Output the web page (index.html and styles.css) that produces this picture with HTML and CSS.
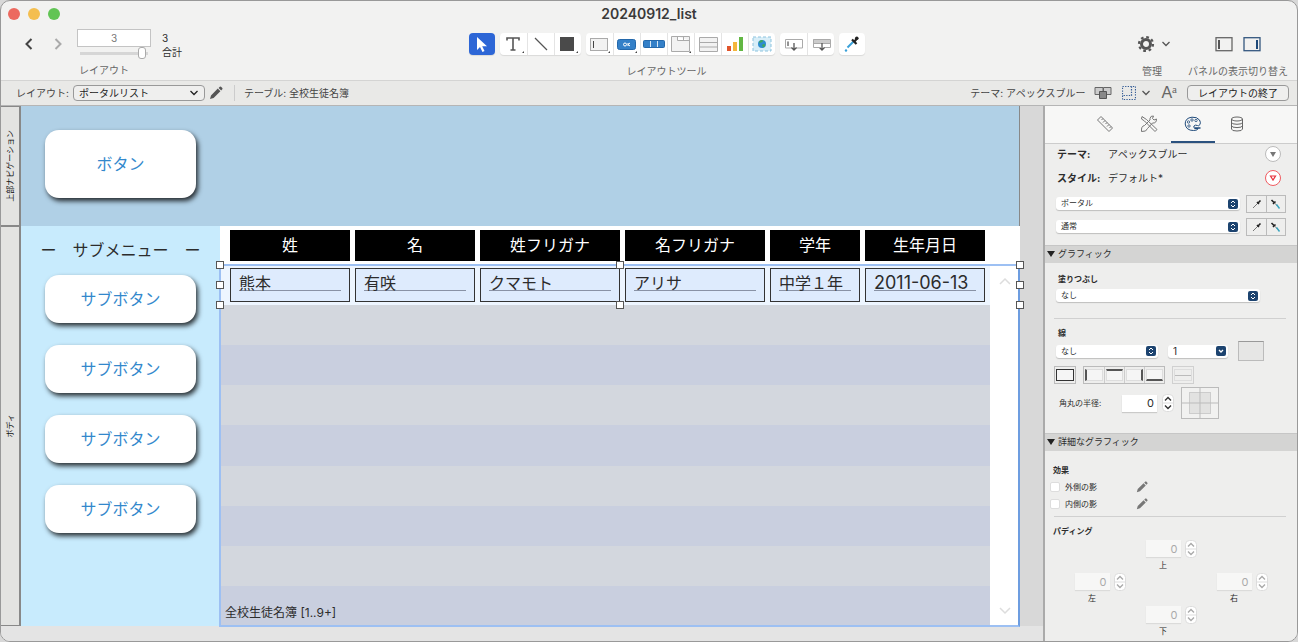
FILE: index.html
```html
<!DOCTYPE html>
<html lang="ja">
<head>
    <meta charset="UTF-8">
    <meta name="viewport" content="width=device-width, initial-scale=1.0">
    <title>20240912_list</title>
    <link rel="stylesheet" href="styles.css">
</head>
<body>
    <!-- shared icons -->
    <svg class="sprite" aria-hidden="true">
        <symbol id="i-pencil" viewBox="0 0 14 14"><path d="M1 13l1-3.600 6.800-6.800 2.600 2.600-6.800 6.800zM9.600 1.900l1.200-1.200q.6-.5 1.200 0l1.300 1.300q.5.6 0 1.200l-1.100 1.200z"/></symbol>
        <symbol id="i-down" viewBox="0 0 10 6"><path d="M1.500 1l3.500 3.500L8.500 1" fill="none" stroke="currentColor" stroke-width="1.300"/></symbol>
        <symbol id="i-updown" viewBox="0 0 10 10"><rect width="10" height="10" rx="2" fill="#1d4470"/><path d="M3 4l2-2 2 2M3 6l2 2 2-2" fill="none" stroke="#fff"/></symbol>
        <symbol id="i-combo" viewBox="0 0 10 10"><rect width="10" height="10" rx="2" fill="#1d4470"/><path d="M3 4l2 2 2-2" fill="none" stroke="#fff" stroke-width="1.300"/></symbol>
        <symbol id="i-stepper" viewBox="0 0 12 18"><rect x=".5" y=".5" width="11" height="17" rx="4" fill="#fff" stroke="#dcdcdc"/><path d="M1 9h10" stroke="#ddd"/><path d="M3 6.500l3-3 3 3M3 11.500l3 3 3-3" fill="none" stroke="currentColor" stroke-width="1.400"/></symbol>
        <symbol id="i-drop" viewBox="0 0 12 12"><path d="M2 10l5-5" stroke="#777"/><path d="M6 4l2 2M7 5l2.500-2.500" stroke="#222" stroke-width="1.600"/></symbol>
        <symbol id="i-drop-fill" viewBox="0 0 12 12"><path d="M1.500 2L4 4.500M3 6l2.500-2.500" stroke="#222" stroke-width="1.600"/><path d="M4.500 5l3 3" stroke="#777"/><path d="M6.500 6.500l3 4" stroke="#35a3bd" stroke-width="1.400"/></symbol>
    </svg>

    <div class="window">
        <header class="titlebar">
            <div class="lights"><i class="red"></i><i class="yellow"></i><i class="green"></i></div>
            <h1>20240912_list</h1>
        </header>

        <div class="toolbar">
            <div class="nav">
                <button class="plain" aria-label="前のレイアウト"><svg width="10" height="14" viewBox="0 0 10 14"><path d="M7.500 2L2.500 7l5 5" fill="none" stroke="#444" stroke-width="2"/></svg></button>
                <button class="plain next" aria-label="次のレイアウト"><svg width="10" height="14" viewBox="0 0 10 14"><path d="M2.500 2l5 5-5 5" fill="none" stroke="#aaa" stroke-width="2"/></svg></button>
                <div class="record">
                    <input class="number" type="text" value="3" aria-label="レイアウト番号">
                    <input class="slider" type="range" min="1" max="3" value="3" aria-label="レイアウト移動">
                    <span class="caption">レイアウト</span>
                </div>
                <div class="total"><span>3</span><span>合計</span></div>
            </div>

            <div class="tools">
                <div class="tool-row">
                    <div class="group selected">
                        <button aria-label="選択"><svg width="26" height="22" viewBox="0 0 26 22"><path d="M8 4v13l3-3 2.500 5 2-1-2.300-4.800H18z" fill="#fff"/></svg></button>
                    </div>
                    <div class="group">
                        <button class="more" aria-label="テキスト"><svg width="26" height="22" viewBox="0 0 26 22"><path d="M7 7.500V5h12v2.500M13 5v12M10.500 17h5" fill="none" stroke="#555" stroke-width="1.600"/></svg></button>
                        <button aria-label="線"><svg width="26" height="22" viewBox="0 0 26 22"><path d="M7 5l12 12" stroke="#555" stroke-width="1.300"/></svg></button>
                        <button class="more" aria-label="図形"><svg width="26" height="22" viewBox="0 0 26 22"><rect x="5" y="4" width="14" height="14" fill="#4a4a4a"/></svg></button>
                    </div>
                    <div class="group">
                        <button class="more" aria-label="フィールド"><svg width="26" height="22" viewBox="0 0 26 22"><rect x="4.500" y="5.500" width="17" height="12" fill="#f2f2f2" stroke="#aaa"/><path d="M7.500 8v7" stroke="#444"/></svg></button>
                        <button class="more" aria-label="ボタン"><svg width="26" height="22" viewBox="0 0 26 22"><rect x="3.500" y="6.500" width="18" height="10" rx="2" fill="#3480c8" stroke="#2468ab"/><circle cx="11" cy="11.500" r="1.500" fill="none" stroke="#fff"/><path d="M14 10v3M16 10l-2 1.500 2 1.500" stroke="#fff" fill="none"/></svg></button>
                        <button aria-label="ボタンバー"><svg width="26" height="22" viewBox="0 0 26 22"><rect x="2.500" y="7.500" width="21" height="7" rx="1" fill="#3480c8" stroke="#2468ab"/><path d="M9.500 8v6M16.500 8v6" stroke="#d5e6f5"/></svg></button>
                        <button class="more" aria-label="タブ"><svg width="26" height="22" viewBox="0 0 26 22"><path d="M3.500 18.500v-15h18v15zM9.500 3.500v4h12M15.500 3.500v4" fill="#f2f2f2" stroke="#aaa"/></svg></button>
                        <button aria-label="ポータル"><svg width="26" height="22" viewBox="0 0 26 22"><path d="M4.500 4.500h18v14h-18zM4.500 9.500h18M4.500 14h18" fill="#f2f2f2" stroke="#aaa"/></svg></button>
                        <button aria-label="グラフ"><svg width="26" height="22" viewBox="0 0 26 22"><path d="M5 13h4v5H5z" fill="#e0542b"/><path d="M11 9h4v9h-4z" fill="#f4b63c"/><path d="M17 4h4v14h-4z" fill="#62b743"/></svg></button>
                        <button aria-label="Web ビューア"><svg width="26" height="22" viewBox="0 0 26 22"><rect x="4" y="4" width="18" height="14" fill="#d8eef8" stroke="#8cc3de" stroke-dasharray="3 2"/><circle cx="13" cy="11" r="4" fill="#2e8ed0"/><path d="M10 9q2-3 4-1.500 0 2-2 2t-1 2zM13 12q3-2 3 0 0 2-2 2.500z" fill="#3fa95c"/></svg></button>
                    </div>
                    <div class="group">
                        <button aria-label="フィールド挿入"><svg width="26" height="22" viewBox="0 0 26 22"><path d="M12 15H5.500V6.500h17V15H16M8 8.500V13" fill="none" stroke="#aaa"/><path d="M8 8.500V13" stroke="#555"/><path d="M14 10v7M11.500 14.500L14 17l2.500-2.500" fill="none" stroke="#555" stroke-width="1.300"/></svg></button>
                        <button aria-label="パート挿入"><svg width="26" height="22" viewBox="0 0 26 22"><path d="M5 6h17v4H5z" fill="#ccc"/><path d="M11 14.500H5.500v-8h17v8H16M5.500 10.500h17" fill="none" stroke="#aaa"/><path d="M14 10v7M11.500 14.500L14 17l2.500-2.500" fill="none" stroke="#555" stroke-width="1.300"/></svg></button>
                    </div>
                    <div class="group">
                        <button aria-label="書式のコピー"><svg width="26" height="22" viewBox="0 0 26 22"><path d="M8.500 14.500l6-6" stroke="#39a0d8" stroke-width="2"/><path d="M13 6.500l4.500 4.500M15 9l3-3.500" stroke="#222" stroke-width="2.200"/><circle cx="17.800" cy="5.200" r="1.800" fill="#222"/><circle cx="7" cy="17.500" r="1.200" fill="#39a0d8"/></svg></button>
                    </div>
                </div>
                <span class="caption">レイアウトツール</span>
            </div>

            <div class="side">
                <div class="side-item">
                    <div class="side-row">
                        <button class="plain" aria-label="管理"><svg width="18" height="18" viewBox="0 0 18 18"><circle cx="9" cy="9" r="4.500" fill="none" stroke="#555" stroke-width="3"/><circle cx="9" cy="9" r="7" fill="none" stroke="#555" stroke-width="2.200" stroke-dasharray="2.750 2.750"/></svg></button>
                        <svg class="chev" width="10" height="6"><use href="#i-down"/></svg>
                    </div>
                    <span class="caption">管理</span>
                </div>
                <div class="side-item">
                    <div class="side-row panels">
                        <button class="plain" aria-label="左パネル"><svg width="18" height="15" viewBox="0 0 18 15"><rect x="1" y=".7" width="16" height="13" fill="none" stroke="#666" stroke-width="1.300"/><path d="M4 3v9" stroke="#555" stroke-width="2"/></svg></button>
                        <button class="plain" aria-label="右パネル"><svg width="18" height="15" viewBox="0 0 18 15"><rect x="1" y=".7" width="16" height="13" fill="none" stroke="#34577f" stroke-width="1.300"/><path d="M14 3v9" stroke="#1f4a7a" stroke-width="2"/></svg></button>
                    </div>
                    <span class="caption">パネルの表示切り替え</span>
                </div>
            </div>
        </div>

        <div class="layoutbar">
            <label for="layout">レイアウト:</label>
            <div class="popup outline">
                <select id="layout"><option>ポータルリスト</option></select>
                <svg width="10" height="6"><use href="#i-down"/></svg>
            </div>
            <button class="plain edit" aria-label="レイアウト設定"><svg width="14" height="14" fill="#555"><use href="#i-pencil"/></svg></button>
            <span class="table-name">テーブル: 全校生徒名簿</span>
            <span class="theme-name">テーマ: アペックスブルー</span>
            <button class="plain" aria-label="テーマ変更"><svg width="18" height="14" viewBox="0 0 18 14"><path d="M1 1.500h8v7H1zM9.500 1.500h7.500v7H9.500z" fill="#ccc" stroke="#666"/><path d="M5.500 5.500h7v7h-7z" fill="#888" stroke="#555"/></svg></button>
            <button class="plain" aria-label="表示"><svg width="14" height="14" viewBox="0 0 14 14"><path d="M.5 .5h13v13H.5zM9.500 .5v9h-9" fill="none" stroke="#345c96" stroke-width="1.200" stroke-dasharray="1.300 1.300"/></svg></button>
            <svg class="chev" width="10" height="6"><use href="#i-down"/></svg>
            <button class="plain font-size" aria-label="書式設定">A<sup>a</sup></button>
            <button class="exit">レイアウトの終了</button>
        </div>

        <div class="main">
            <main class="canvas">
                <div class="part top-part">
                    <div class="part-label"><span>上部ナビゲーション</span></div>
                    <div class="top-nav"><button class="card big">ボタン</button></div>
                </div>
                <div class="part body-part">
                    <div class="part-label"><span>ボディ</span></div>
                    <nav class="submenu">
                        <h2>ー　サブメニュー　ー</h2>
                        <button class="card">サブボタン</button>
                        <button class="card">サブボタン</button>
                        <button class="card">サブボタン</button>
                        <button class="card">サブボタン</button>
                    </nav>
                    <div class="list">
                        <table>
                            <colgroup><col class="c-first"><col class="c-name"><col class="c-kana"><col class="c-kana"><col class="c-grade"><col class="c-date"><col></colgroup>
                            <thead>
                                <tr><th><div>姓</div></th><th><div>名</div></th><th><div>姓フリガナ</div></th><th><div>名フリガナ</div></th><th><div>学年</div></th><th><div>生年月日</div></th><th></th></tr>
                            </thead>
                            <tbody>
                                <tr class="record-row"><td><div><span>熊本</span></div></td><td><div><span>有咲</span></div></td><td><div><span>クマモト</span></div></td><td><div><span>アリサ</span></div></td><td><div><span>中学１年</span></div></td><td><div><span class="date">2011-06-13</span></div></td><td></td></tr>
                                <tr class="stripe"><td colspan="7"></td></tr>
                                <tr class="stripe"><td colspan="7"></td></tr>
                                <tr class="stripe"><td colspan="7"></td></tr>
                                <tr class="stripe"><td colspan="7"></td></tr>
                                <tr class="stripe"><td colspan="7"></td></tr>
                                <tr class="stripe"><td colspan="7"></td></tr>
                                <tr class="stripe"><td colspan="7"></td></tr>
                                <tr class="stripe"><td colspan="7">全校生徒名簿 [1..9+]</td></tr>
                            </tbody>
                        </table>
                        <div class="scroll">
                            <svg width="12" height="8" viewBox="0 0 12 8"><path d="M1 7l5-5 5 5" fill="none" stroke="#ddd" stroke-width="1.500"/></svg>
                            <svg width="12" height="8" viewBox="0 0 12 8"><path d="M1 1l5 5 5-5" fill="none" stroke="#ddd" stroke-width="1.500"/></svg>
                        </div>
                        <div class="portal-frame"></div>
                        <div class="handles"><i class="tl"></i><i class="tc"></i><i class="tr"></i><i class="ml"></i><i class="mr"></i><i class="bl"></i><i class="bc"></i><i class="br"></i></div>
                    </div>
                </div>
            </main>

            <aside class="inspector">
                <div class="tabs">
                    <button aria-label="位置"><svg width="18" height="18" viewBox="0 0 18 18"><path d="M1.500 5L5 1.500 16.500 13 13 16.500zM7 3.500L5.500 5M9 5.500L7 7.500M11 7.500L9.500 9M13 9.500l-2 2M15 11.500L13.500 13" fill="none" stroke="#777"/></svg></button>
                    <button aria-label="スタイル"><svg width="18" height="18" viewBox="0 0 18 18"><path d="M2 1.500L1.500 4l3 2L15 16.500l2-2L6.500 4.500zM16.500 4l-2.500 1-1.500-1.500 1-2.500q-3-.5-3.500 2.500L10 5 4.500 10.500Q1 11 1.500 16.500q5 .5 6-3L12.500 8q4 .5 4-4z" fill="none" stroke="#777"/></svg></button>
                    <button class="active" aria-label="外観"><svg width="18" height="16" viewBox="0 0 18 16"><path d="M16 8.500q1-2-.5-4.500Q13 .8 8 1.200 1 2 1.200 8 2 14.500 9.500 14.500q4.500 0 4.500-2h-3q-2-1-1-2.500 1-1.500 3.500-.5 1 1 2.500-1z" fill="none" stroke="#1f4a7a"/><g fill="none" stroke="#1f4a7a" stroke-width=".8"><circle cx="4.500" cy="6" r="1.200"/><circle cx="8" cy="4" r="1.200"/><circle cx="12" cy="4.500" r="1.200"/><circle cx="5" cy="10" r="1.200"/></g><path d="M10.500 12h6" stroke="#1f4a7a" stroke-width="1.500"/></svg></button>
                    <button aria-label="データ"><svg width="14" height="16" viewBox="0 0 14 16"><path d="M1.500 3v10q0 2 5.500 2t5.500-2V3M1.500 6.300q0 2 5.500 2t5.500-2M1.500 9.600q0 2 5.500 2t5.500-2" fill="none" stroke="#666"/><ellipse cx="7" cy="3" rx="5.500" ry="2" fill="none" stroke="#666"/></svg></button>
                </div>

                <div class="theme-row"><b>テーマ:</b><span>アペックスブルー</span><button class="round" aria-label="テーマメニュー"><svg width="8" height="7" viewBox="0 0 8 7"><path d="M1 1h6L4 6z" fill="#777"/></svg></button></div>
                <div class="theme-row style-row"><b>スタイル:</b><span>デフォルト*</span><button class="round red" aria-label="スタイルメニュー"><svg width="8" height="7" viewBox="0 0 8 7"><path d="M1.500 1h5L4 5z" fill="none" stroke="#e8323c" stroke-width="1.200"/></svg></button></div>

                <div class="pick-row">
                    <div class="popup"><select aria-label="オブジェクト"><option>ポータル</option></select><svg width="10" height="10"><use href="#i-updown"/></svg></div>
                    <div class="pair"><button aria-label="コピー"><svg width="12" height="12"><use href="#i-drop"/></svg></button><button aria-label="ペースト"><svg width="12" height="12"><use href="#i-drop-fill"/></svg></button></div>
                </div>
                <div class="pick-row">
                    <div class="popup"><select aria-label="状態"><option>通常</option></select><svg width="10" height="10"><use href="#i-updown"/></svg></div>
                    <div class="pair"><button aria-label="コピー"><svg width="12" height="12"><use href="#i-drop"/></svg></button><button aria-label="ペースト"><svg width="12" height="12"><use href="#i-drop-fill"/></svg></button></div>
                </div>

                <h3>グラフィック</h3>
                <div class="section fill">
                    <label for="fill">塗りつぶし</label>
                    <div class="popup wide"><select id="fill"><option>なし</option></select><svg width="10" height="10"><use href="#i-updown"/></svg></div>
                </div>
                <hr>
                <div class="section line">
                    <label for="line">線</label>
                    <div class="line-row">
                        <div class="popup line-style"><select id="line"><option>なし</option></select><svg width="10" height="10"><use href="#i-updown"/></svg></div>
                        <div class="popup line-width"><select aria-label="線幅"><option>1</option></select><svg width="10" height="10"><use href="#i-combo"/></svg></div>
                        <button class="swatch" aria-label="線の色"></button>
                    </div>
                    <div class="sides">
                        <div class="side-set"><button class="all" aria-label="全辺"><i></i></button></div>
                        <div class="side-set"><button class="left" aria-label="左辺"><i></i></button><button class="top" aria-label="上辺"><i></i></button><button class="right" aria-label="右辺"><i></i></button><button class="bottom" aria-label="下辺"><i></i></button></div>
                        <div class="side-set off"><button class="between" aria-label="行間"><i></i></button></div>
                    </div>
                    <div class="radius-row">
                        <label for="radius">角丸の半径:</label>
                        <input id="radius" type="text" value="0">
                        <svg class="step" width="12" height="18"><use href="#i-stepper"/></svg>
                        <svg class="corners" width="38" height="32" viewBox="0 0 38 32"><rect x=".5" y=".5" width="37" height="31" fill="#f1f1f0" stroke="#bbb"/><rect x="8.500" y="5.500" width="21" height="21" fill="#e2e2e1" stroke="#ccc"/><path d="M19 1v30M1 16h36" stroke="#bbb"/></svg>
                    </div>
                </div>

                <h3>詳細なグラフィック</h3>
                <div class="section effects">
                    <b>効果</b>
                    <div class="check"><input type="checkbox" id="outer"><label for="outer">外側の影</label><button class="plain" aria-label="外側の影を編集"><svg width="12" height="12" fill="#777"><use href="#i-pencil"/></svg></button></div>
                    <div class="check"><input type="checkbox" id="inner"><label for="inner">内側の影</label><button class="plain" aria-label="内側の影を編集"><svg width="12" height="12" fill="#777"><use href="#i-pencil"/></svg></button></div>
                </div>
                <hr>
                <div class="section padding">
                    <b>パディング</b>
                    <div class="pads">
                        <div class="pad up"><input id="p-top" type="text" value="0" disabled><svg class="step" width="12" height="18"><use href="#i-stepper"/></svg><label for="p-top">上</label></div>
                        <div class="pad lt"><input id="p-left" type="text" value="0" disabled><svg class="step" width="12" height="18"><use href="#i-stepper"/></svg><label for="p-left">左</label></div>
                        <div class="pad rt"><input id="p-right" type="text" value="0" disabled><svg class="step" width="12" height="18"><use href="#i-stepper"/></svg><label for="p-right">右</label></div>
                        <div class="pad dn"><input id="p-bottom" type="text" value="0" disabled><svg class="step" width="12" height="18"><use href="#i-stepper"/></svg><label for="p-bottom">下</label></div>
                    </div>
                </div>
            </aside>
        </div>
    </div>
</body>
</html>
```
FILE: styles.css
```css
* {
    box-sizing: border-box;
}
body {
    margin: 0;
    background: #d8d8d8;
    color: #2c2c2c;
    font-family: Inter, "Noto Sans CJK JP", sans-serif;
    font-size: 10px;
    line-height: 16px;
}
button, input, select {
    font: inherit;
    color: inherit;
    margin: 0;
    padding: 0;
    border: none;
    background: none;
    border-radius: 0;
}
svg {
    display: block;
    flex: none;
}
h1, h2, h3 {
    margin: 0;
    font-weight: normal;
}
.sprite {
    position: absolute;
    width: 0;
    height: 0;
}
.window {
    display: flex;
    flex-direction: column;
    min-height: 100vh;
    border: 1px solid #999;
    border-radius: 10px;
    overflow: hidden;
    background: #f2f2f1;
}

/* title bar */
.titlebar {
    display: grid;
    grid-template-columns: 1fr auto 1fr;
    align-items: center;
    height: 26px;
    padding: 0 7px;
}
.titlebar h1 {
    font-size: 14px;
    font-weight: 600;
    color: #3a3a3a;
}
.lights {
    display: flex;
    gap: 8px;
}
.lights i {
    width: 12px;
    height: 12px;
    border-radius: 50%;
}
.lights .red { background: #ec695f; }
.lights .yellow { background: #f4be4f; }
.lights .green { background: #61c454; }

/* toolbar */
.toolbar {
    display: flex;
    justify-content: space-between;
    height: 54px;
    padding: 0 9px 0 21px;
    border-bottom: 1px solid #d4d4d3;
}
.plain {
    display: flex;
    align-items: center;
    justify-content: center;
}
.caption {
    color: #666;
    line-height: 16px;
}
.nav {
    display: flex;
    align-items: flex-start;
    padding-right: 14px;
}
.nav .plain {
    width: 14px;
    height: 34px;
}
.nav .next {
    width: 28px;
    margin-left: 8px;
}
.record {
    display: flex;
    flex-direction: column;
    width: 74px;
    margin: 2px 0 0 5px;
}
.number {
    width: 100%;
    height: 18px;
    background: #fff;
    border: 1px solid #c4c4c4;
    text-align: center;
    color: #777;
}
.slider {
    appearance: none;
    width: 100%;
    height: 12px;
    padding: 0 5px 0 2px;
    background: linear-gradient(#d6d6d6, #d6d6d6) center / 68px 3px no-repeat;
}
.slider::-webkit-slider-thumb {
    appearance: none;
    width: 8px;
    height: 12px;
    border: 1px solid #aaa;
    border-radius: 3px;
    background: #fff;
}
.record .caption {
    padding-left: 2px;
    margin-top: 3px;
}
.total {
    display: flex;
    flex-direction: column;
    padding: 4px 0 0 11px;
    line-height: 14px;
}
.tools {
    display: flex;
    flex-direction: column;
    align-items: center;
    gap: 8px;
    padding-top: 6px;
}
.tool-row {
    display: flex;
    gap: 5px;
}
.group {
    display: flex;
    background: #fff;
    border-radius: 4px;
    box-shadow: 0 1px 1px rgba(0, 0, 0, 0.1);
}
.group button {
    position: relative;
    width: 27px;
    height: 22px;
}
.group button:only-child {
    width: 26px;
}
.group button + button {
    border-left: 1px solid #e4e4e4;
}
.group.selected {
    background: #2d66d6;
}
.more::after {
    content: "";
    position: absolute;
    right: 3px;
    bottom: 2px;
    border: 1px solid #444;
    border-top-color: transparent;
    border-left-color: transparent;
}
.side {
    display: flex;
    gap: 17px;
}
.side-item {
    display: flex;
    flex-direction: column;
    align-items: center;
    gap: 2px;
}
.side-item:first-child .caption {
    align-self: flex-start;
    padding-left: 5px;
}
.side-row {
    display: flex;
    align-items: center;
    gap: 6px;
    height: 34px;
}
.panels {
    gap: 10px;
}
.chev {
    color: #555;
}

/* layout bar */
.layoutbar {
    display: flex;
    align-items: center;
    height: 25px;
    padding: 0 8px 0 15px;
    background: #e9e9e7;
    border-bottom: 1px solid #b5b5b5;
    color: #444;
}
.popup {
    display: grid;
    align-items: center;
    background: #fff;
    border-radius: 3px;
    box-shadow: 0 1px 1px rgba(0, 0, 0, 0.2);
    font-size: 8px;
}
.popup select {
    grid-area: 1 / 1;
    appearance: none;
    width: 100%;
    height: 13px;
    padding: 0 16px 0 5px;
    line-height: 13px;
}
.popup svg {
    grid-area: 1 / 1;
    justify-self: end;
    margin-right: 2px;
    pointer-events: none;
}
.popup.outline {
    width: 132px;
    margin: 0 4px;
    background: #efefee;
    border: 1px solid #999;
    border-radius: 4px;
    box-shadow: none;
    font-size: 10px;
    color: #222;
}
.popup.outline select {
    height: 14px;
    line-height: 14px;
}
.popup.outline svg {
    margin-right: 5px;
}
.layoutbar .plain {
    padding: 0 5px;
}
.layoutbar .edit {
    padding: 0;
}
.table-name {
    margin-left: 11px;
    padding-left: 9px;
    border-left: 1px solid #ccc;
}
.theme-name {
    margin-left: auto;
    padding-right: 4px;
}
.font-size {
    font-family: "Liberation Sans", sans-serif;
    font-size: 16px;
    color: #666;
}
.layoutbar .font-size {
    padding: 0 10px;
}
.font-size sup {
    font-family: "Liberation Serif", serif;
    font-size: 11px;
    line-height: 8px;
    align-self: flex-start;
}
.exit {
    width: 102px;
    height: 16px;
    line-height: 14px;
    border: 1px solid #999;
    border-radius: 4px;
    background: #efefee;
    color: #222;
}

/* layout canvas */
.main {
    display: flex;
    flex: 1;
}
.canvas {
    flex: 1;
    min-width: 0;
    padding-right: 23px;
    background: linear-gradient(#d8d8d8, #d8d8d8) right top / 23px 520px no-repeat #e4e4e4;
}
.part {
    display: flex;
}
.part-label {
    display: flex;
    align-items: center;
    justify-content: center;
    width: 20px;
    flex: none;
    background: #e3e3e1;
    border: solid #888;
    border-width: 1px 2px 1px 0;
    font-size: 8px;
    color: #111;
}
.part-label span {
    writing-mode: vertical-rl;
    text-orientation: sideways;
    transform: rotate(180deg);
}
.top-part {
    height: 120px;
}
.top-nav {
    flex: 1;
    padding: 24px;
    background: #b0d0e6;
    border-right: 1px solid #888;
}
.card {
    display: block;
    width: 151px;
    height: 48px;
    border-radius: 14px;
    background: #fff;
    box-shadow: 2px 3px 5px rgba(0, 0, 0, 0.8);
    color: #3388cc;
    font-size: 16px;
}
.card.big {
    height: 68px;
}
.body-part {
    height: 400px;
}
.submenu {
    display: flex;
    flex-direction: column;
    gap: 22px;
    width: 199px;
    padding: 12px 24px;
    background: #c8ebfd;
}
.submenu h2 {
    align-self: center;
    font-size: 16px;
    line-height: 24px;
    margin-bottom: -9px;
    white-space: nowrap;
}
.list {
    position: relative;
    display: flex;
    flex: 1;
    background: #fff;
}
table {
    flex: 1;
    table-layout: fixed;
    width: 100%;
    border-collapse: collapse;
    font-size: 16px;
}
.c-first { width: 130px; }
.c-name, .c-date { width: 125px; }
.c-kana { width: 145px; }
.c-grade { width: 95px; }
th, td {
    padding: 0 0 0 5px;
    font-weight: normal;
    text-align: left;
    vertical-align: top;
}
th:first-child, .record-row td:first-child {
    padding-left: 10px;
}
th {
    height: 39px;
    padding-top: 4px;
}
th div {
    height: 31px;
    background: #000;
    color: #fff;
    line-height: 30px;
    text-align: center;
}
.record-row {
    background: #edf5ff;
}
.record-row td {
    height: 40px;
    padding-top: 3px;
}
.record-row div {
    height: 34px;
    padding: 3px 8px;
    border: 1px solid #333;
    background: #deebfd;
}
.record-row span {
    display: block;
    height: 19px;
    border-bottom: 1px solid #8992a5;
    line-height: 22px;
}
.record-row .date {
    font-size: 18px;
}
.stripe {
    background: #d3d7de;
    font-size: 12px;
}
.stripe:nth-child(odd) {
    background: #c9cfdf;
}
.stripe td {
    height: 40px;
    line-height: 26px;
    vertical-align: bottom;
}
.scroll {
    display: flex;
    flex-direction: column;
    justify-content: space-between;
    align-items: center;
    width: 30px;
    padding: 51px 0 11px;
}
.portal-frame {
    position: absolute;
    inset: 38px 0 -1px -1px;
    border: 2px solid #9dc0f3;
    border-right-color: #6d9de0;
}
.handles {
    position: absolute;
    top: 39px;
    left: 0;
    right: 0;
    height: 40px;
}
.handles i {
    position: absolute;
    width: 8px;
    height: 8px;
    margin: -4px;
    border: 1px solid #555;
    background: #fff;
}
.tl, .tc, .tr { top: 0; }
.ml, .mr { top: 50%; }
.bl, .bc, .br { top: 100%; }
.tl, .ml, .bl { left: 0; }
.tc, .bc { left: 50%; }
.tr, .mr, .br { left: 100%; }

/* inspector */
.inspector {
    width: 254px;
    flex: none;
    border-left: 2px solid #aaa;
    background: #eeeeed;
    font-size: 8px;
}
.tabs {
    display: flex;
    justify-content: center;
    height: 38px;
    background: #f7f7f6;
    border-bottom: 1px solid #ccc;
}
.tabs button {
    display: flex;
    align-items: center;
    justify-content: center;
    width: 44px;
    border-bottom: 2px solid transparent;
}
.tabs .active {
    border-color: #2b527f;
}
.theme-row {
    display: grid;
    grid-template-columns: 51px 1fr 16px;
    align-items: center;
    height: 20px;
    padding: 0 16px 0 12px;
    font-size: 10px;
}
.style-row {
    height: 28px;
}
.round {
    display: flex;
    align-items: center;
    justify-content: center;
    width: 16px;
    height: 16px;
    border: 1px solid #bbb;
    border-radius: 50%;
    background: #fff;
}
.round.red {
    border-color: #ef5b61;
}
.pick-row {
    display: grid;
    grid-template-columns: 1fr auto;
    gap: 6px;
    align-items: center;
    height: 23px;
    padding: 0 11px;
}
.pair {
    display: flex;
    border: 1px solid #bbb;
}
.pair button {
    display: flex;
    align-items: center;
    justify-content: center;
    width: 19px;
    height: 16px;
}
.pair button + button {
    border-left: 1px solid #bbb;
}
h3 {
    height: 18px;
    margin-top: 7px;
    padding-left: 2px;
    background: #d4d4d3;
    border-top: 1px solid #c6c6c6;
    font-size: 9px;
}
h3::before {
    content: "";
    display: inline-block;
    margin-right: 3px;
    border: 4px solid transparent;
    border-top: 6px solid #222;
    border-bottom: none;
}
.section {
    padding: 0 11px;
}
.fill {
    padding-top: 8px;
}
.fill label, .line > label, .section > b {
    display: block;
    font-weight: bold;
}
.fill label, .line > label {
    padding-left: 2px;
}
.fill .popup {
    width: 204px;
    margin: 2px 0 16px;
}
hr {
    height: 1px;
    margin: 0 11px 0 9px;
    border: none;
    background: #d0d0d0;
}
.line {
    padding-top: 6px;
}
.line-row {
    display: flex;
    align-items: center;
    gap: 10px;
    height: 20px;
}
.line-style { width: 102px; }
.line-width {
    width: 60px;
    font-size: 10px;
}
.swatch {
    width: 26px;
    height: 20px;
    border: 1px solid #bbb;
    border-top-color: #999;
    background: #e6e6e5;
}
.sides {
    display: flex;
    gap: 7px;
    margin: 5px 0 3px -2px;
}
.side-set {
    display: flex;
    border: 1px solid #bbb;
}
.side-set button {
    width: 20px;
    height: 16px;
    padding: 2px 1px;
}
.side-set button + button {
    border-left: 1px solid #ccc;
}
.side-set i {
    display: block;
    height: 12px;
    border: 1px solid #ddd;
    background: #f5f5f5;
}
.side-set .all i { border: 1px solid #333; }
.side-set .left i { border-left: 2px solid #555; }
.side-set .top i { border-top: 2px solid #555; }
.side-set .right i { border-right: 2px solid #555; }
.side-set .bottom i { border-bottom: 2px solid #555; }
.side-set.off { border-color: #d0d0d0; }
.side-set .between i {
    background: linear-gradient(#bbb, #bbb) center / 100% 1px no-repeat;
}
.radius-row {
    display: flex;
    align-items: center;
    gap: 5px;
    padding-left: 3px;
}
.radius-row label {
    width: 58px;
}
.radius-row input, .pad input {
    width: 35px;
    height: 17px;
    padding-right: 3px;
    background: #fff;
    box-shadow: 0 1px 1px rgba(0, 0, 0, 0.15);
    font-size: 11px;
    text-align: right;
}
.corners {
    margin-left: 2px;
}
.line + h3 {
    margin-top: 14px;
}
.effects {
    padding: 11px 8px 4px;
}
.check {
    display: flex;
    align-items: center;
    height: 17px;
}
.check input {
    appearance: none;
    width: 10px;
    height: 10px;
    margin-left: -3px;
    margin-right: 5px;
    border-radius: 2px;
    background: #fff;
    border: 1px solid #ddd;
}
.check label {
    width: 71px;
}
.padding {
    padding: 6px 8px 0;
}
.pads {
    display: grid;
    grid-template-columns: repeat(3, 71px);
    grid-template-areas: ". up ." "lt . rt" ". dn .";
    justify-content: center;
    justify-items: center;
}
.pad {
    display: grid;
    grid-template-columns: 35px 12px;
    column-gap: 4px;
    align-items: center;
    height: 33px;
}
.pad label {
    text-align: center;
    line-height: 12px;
}
.pad input {
    background: #f7f7f6;
    color: #aaa;
    box-shadow: 0 1px 1px rgba(0, 0, 0, 0.08);
}
.step {
    color: #333;
}
.pad .step {
    color: #aaa;
}
.up { grid-area: up; }
.lt { grid-area: lt; }
.rt { grid-area: rt; }
.dn { grid-area: dn; }
```
